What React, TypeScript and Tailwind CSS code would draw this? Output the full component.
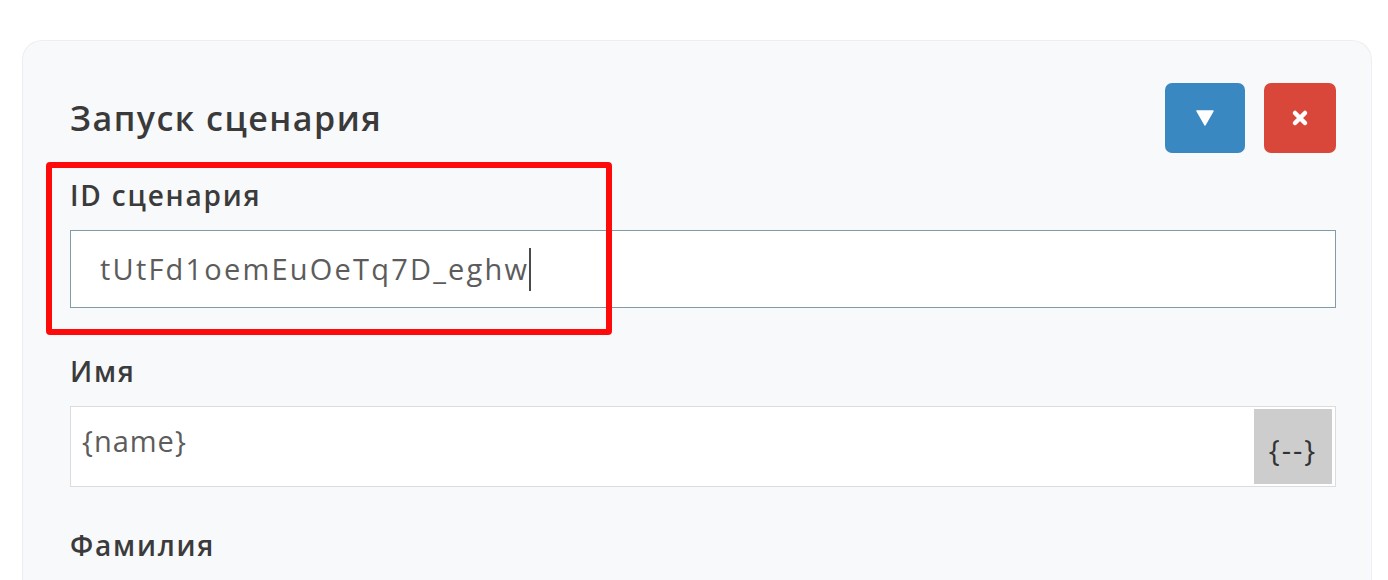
import React from 'react';

const font = { fontFamily: '"Open Sans", "Noto Sans", sans-serif' };

const Label: React.FC<{ text: string }> = ({ text }) => (
    <div className="text-[28px] leading-[30px] tracking-[1.8px] font-semibold text-[#3b3b3b] mb-[20px]">{text}</div>
);

const App: React.FC = () => {
    return (
        <div className="min-h-screen bg-white pt-[40px] pl-[22px] pr-[16px]" style={font}>
            {/* Card */}
            <div className="h-[560px] rounded-t-[20px] border border-b-0 border-[#eceef1] bg-[#f8f9fb] pl-[47px] pr-[35px] pt-[42px]">
                {/* Header */}
                <div className="flex items-center justify-between">
                    <h2 className="text-[34px] leading-[40px] tracking-[1.5px] font-semibold text-[#3a3a3a]">Запуск сценария</h2>
                    <div className="flex gap-[19px]">
                        <button className="w-[80px] h-[70px] rounded-[7px] bg-[#3a88c1] flex items-center justify-center">
                            <svg width="18" height="16" viewBox="0 0 18 16">
                                <path d="M1 1 H17 L9 15 Z" fill="white" stroke="white" strokeWidth="1.5" strokeLinejoin="round" />
                            </svg>
                        </button>
                        <button className="w-[72px] h-[70px] rounded-[7px] bg-[#d9473b] flex items-center justify-center">
                            <svg width="18" height="18" viewBox="0 0 18 18">
                                <path d="M4 4 L14 14 M14 4 L4 14" stroke="white" strokeWidth="4.5" strokeLinecap="round" />
                            </svg>
                        </button>
                    </div>
                </div>

                {/* ID field, highlighted */}
                <div className="relative mt-[27px]">
                    <Label text="ID сценария" />
                    <div className="h-[78px] border border-[#7f9ca8] bg-white flex items-center pl-[29px]">
                        <span className="text-[29px] tracking-[2.2px] text-[#5c5c5c]">tUtFd1oemEuOeTq7D_eghw</span>
                        <span className="w-[2px] h-[43px] bg-[#4a4a4a]"></span>
                    </div>
                    <div className="absolute left-[-24px] top-[-18px] w-[566px] h-[173px] border-[6px] border-[#ff0a0a] rounded-[4px]"></div>
                </div>

                {/* Name field */}
                <div className="mt-[48px]">
                    <Label text="Имя" />
                    <div className="h-[81px] border border-[#dcdcdc] bg-white flex items-stretch">
                        <div className="flex-1 flex items-start pt-[12px] pl-[11px] text-[29px] tracking-[1px] text-[#5c5c5c]">{'{name}'}</div>
                        <div className="w-[78px] my-[2px] mr-[3px] pt-[6px] bg-[#cdcdcd] flex items-center justify-center text-[29px] tracking-[2px] text-[#333]">
                            {'{--}'}
                        </div>
                    </div>
                </div>

                {/* Surname label */}
                <div className="mt-[43px]">
                    <Label text="Фамилия" />
                </div>
            </div>
        </div>
    );
};

export default App;
